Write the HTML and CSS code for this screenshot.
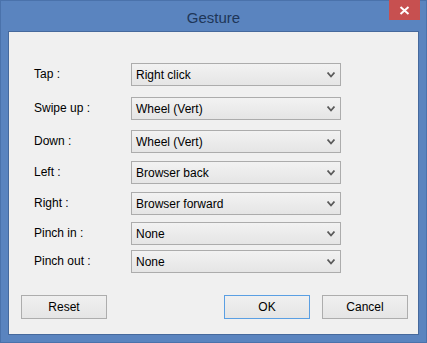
FILE: index.html
```html
<!DOCTYPE html>
<html lang="en">

<head>
    <meta charset="UTF-8">
    <title>Gesture</title>
    <link rel="stylesheet" href="styles.css">
</head>

<body>
    <div class="window">
        <div class="titlebar">
            <span class="title">Gesture</span>
            <div class="close-button">
                <svg width="11" height="9" viewBox="0 0 11 9">
                    <path d="M1.5 1 L9.5 8 M9.5 1 L1.5 8" stroke="#fff" stroke-width="2" fill="none" />
                </svg>
            </div>
        </div>

        <div class="client">
            <div class="form">
                <div class="row">
                    <label class="title-label">Tap :</label>
                    <div class="combo"><span>Right click</span><svg class="chevron" width="8" height="6" viewBox="0 0 8 6"><path d="M0.5 0.5 L4 4.5 L7.5 0.5" stroke="#5a5a5a" stroke-width="1.8" fill="none" /></svg></div>
                </div>
                <div class="row">
                    <label class="title-label">Swipe up :</label>
                    <div class="combo"><span>Wheel (Vert)</span><svg class="chevron" width="8" height="6" viewBox="0 0 8 6"><path d="M0.5 0.5 L4 4.5 L7.5 0.5" stroke="#5a5a5a" stroke-width="1.8" fill="none" /></svg></div>
                </div>
                <div class="row">
                    <label class="title-label">Down :</label>
                    <div class="combo"><span>Wheel (Vert)</span><svg class="chevron" width="8" height="6" viewBox="0 0 8 6"><path d="M0.5 0.5 L4 4.5 L7.5 0.5" stroke="#5a5a5a" stroke-width="1.8" fill="none" /></svg></div>
                </div>
                <div class="row">
                    <label class="title-label">Left :</label>
                    <div class="combo"><span>Browser back</span><svg class="chevron" width="8" height="6" viewBox="0 0 8 6"><path d="M0.5 0.5 L4 4.5 L7.5 0.5" stroke="#5a5a5a" stroke-width="1.8" fill="none" /></svg></div>
                </div>
                <div class="row">
                    <label class="title-label">Right :</label>
                    <div class="combo"><span>Browser forward</span><svg class="chevron" width="8" height="6" viewBox="0 0 8 6"><path d="M0.5 0.5 L4 4.5 L7.5 0.5" stroke="#5a5a5a" stroke-width="1.8" fill="none" /></svg></div>
                </div>
                <div class="row">
                    <label class="title-label">Pinch in :</label>
                    <div class="combo"><span>None</span><svg class="chevron" width="8" height="6" viewBox="0 0 8 6"><path d="M0.5 0.5 L4 4.5 L7.5 0.5" stroke="#5a5a5a" stroke-width="1.8" fill="none" /></svg></div>
                </div>
                <div class="row">
                    <label class="title-label">Pinch out :</label>
                    <div class="combo"><span>None</span><svg class="chevron" width="8" height="6" viewBox="0 0 8 6"><path d="M0.5 0.5 L4 4.5 L7.5 0.5" stroke="#5a5a5a" stroke-width="1.8" fill="none" /></svg></div>
                </div>
            </div>

            <div class="button-bar">
                <button class="btn">Reset</button>
                <div class="spacer"></div>
                <button class="btn btn-default">OK</button>
                <button class="btn">Cancel</button>
            </div>
        </div>
    </div>
</body>

</html>
```

FILE: styles.css
```css
body {
    margin: 0;
    padding: 0;
    font-family: 'Liberation Sans', Arial, sans-serif;
    font-size: 12px;
    color: #000;
    background: #fff;
}

.window {
    width: 427px;
    height: 343px;
    box-sizing: border-box;
    background: #5a84bf;
    border: 1px solid #4a72ab;
    display: flex;
    flex-direction: column;
}

.titlebar {
    position: relative;
    height: 30px;
    display: flex;
    align-items: center;
    justify-content: center;
}

.title {
    font-size: 15px;
    color: #1e3658;
    margin-top: 2px;
}

.close-button {
    position: absolute;
    top: -1px;
    right: 6px;
    width: 31px;
    height: 20px;
    background: #c75050;
    display: flex;
    align-items: center;
    justify-content: center;
}

.client {
    flex: 1;
    margin: 0 7px 7px;
    background: #f0f0f0;
    border: 1px solid #46699c;
    display: flex;
    flex-direction: column;
}

.form {
    padding: 31px 0 0 25px;
}

.row {
    display: flex;
    align-items: center;
    height: 23px;
}

.row:nth-child(2) {
    margin-top: 11px;
}

.row:nth-child(3) {
    margin-top: 10px;
}

.row:nth-child(4),
.row:nth-child(5) {
    margin-top: 8px;
}

.row:nth-child(6) {
    margin-top: 7px;
}

.row:nth-child(7) {
    margin-top: 5px;
}

.title-label {
    width: 97px;
    margin-top: -2px;
}

.combo {
    width: 210px;
    height: 23px;
    box-sizing: border-box;
    border: 1px solid #acacac;
    background: linear-gradient(#f2f2f2, #e5e5e5);
    display: flex;
    align-items: center;
    justify-content: space-between;
    padding: 0 5px 0 4px;
}

.chevron {
    margin-top: 1px;
}

.button-bar {
    display: flex;
    padding: 22px 10px 0 12px;
}

.spacer {
    flex: 1;
}

.btn {
    width: 86px;
    height: 24px;
    box-sizing: border-box;
    border: 1px solid #adadad;
    background: linear-gradient(#f0f0f0, #e5e5e5);
    font-family: 'Liberation Sans', Arial, sans-serif;
    font-size: 12px;
    color: #000;
    padding: 0;
    margin-left: 12px;
}

.btn:first-child {
    margin-left: 0;
}

.btn-default {
    border-color: #5a9fe3;
}
```
